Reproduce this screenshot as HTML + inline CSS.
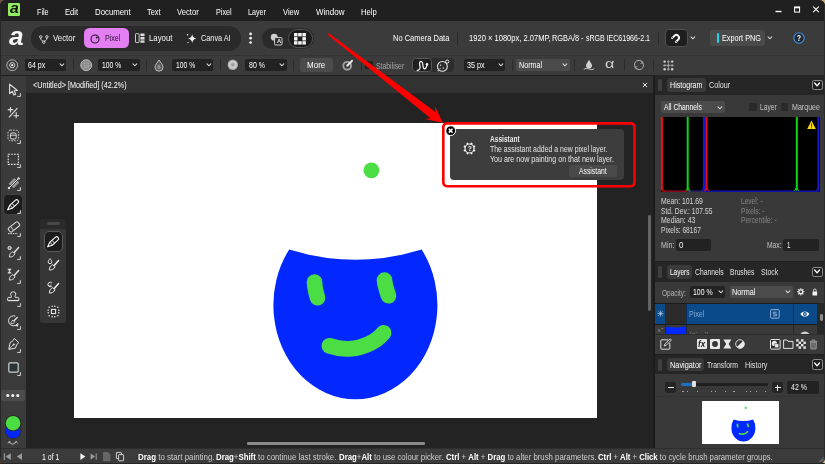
<!DOCTYPE html>
<html lang="en">
<head>
<meta charset="utf-8">
<title>Affinity - Assistant</title>
<style>
html,body{margin:0;padding:0;}
body{width:825px;height:464px;overflow:hidden;background:#202020;font-family:"Liberation Sans", sans-serif;position:relative;}
#app{filter:blur(0.4px);position:absolute;left:0;top:0;width:825px;height:464px;overflow:hidden;background:#202020;}
#app div,#app svg,#app span.t{position:absolute;}
#app svg{overflow:visible;}
#app div.sec{left:0;top:0;width:0;height:0;}
span.t{white-space:pre;transform-origin:0 50%;}
span.t b{font-weight:700;color:#fff;}
</style>
</head>
<body>
<div id="app">
<div style="left:0px;top:0px;width:12px;height:12px;background:#6e5048;"></div>
<div style="left:813px;top:0px;width:12px;height:12px;background:#c8aa78;"></div>
<div style="left:0px;top:452px;width:12px;height:12px;background:#5c3a2c;"></div>
<div style="left:813px;top:452px;width:12px;height:12px;background:#d6c49c;"></div>
<div style="left:0px;top:0px;width:825px;height:464px;background:#232323;border-radius:6px;"></div>
<div style="left:0px;top:0px;width:825px;height:21px;background:#202020;border-radius:6px 6px 0 0;"></div>
<div style="left:0px;top:21px;width:825px;height:34.5px;background:#3b3b3b;"></div>
<div style="left:0px;top:55px;width:825px;height:1px;background:#333;"></div>
<div style="left:0px;top:56px;width:825px;height:19px;background:#3b3b3b;"></div>
<div style="left:0px;top:74.5px;width:825px;height:1.5px;background:#1e1e1e;"></div>
<div style="left:26px;top:76px;width:627px;height:17px;background:#323232;"></div>
<div style="left:26px;top:93.5px;width:629px;height:355px;background:#232323;"></div>
<div style="left:0px;top:76px;width:26px;height:372px;background:#3b3b3b;"></div>
<div style="left:0px;top:448px;width:825px;height:16px;background:#3b3b3b;border-radius:0 0 6px 6px;"></div>
<div style="left:654.5px;top:75px;width:170.5px;height:373px;background:#393939;"></div>
<div class="sec" id="menubar">
<div style="left:7.9px;top:3.2px;width:12.4px;height:12.7px;background:#94ec62;border-radius:1.2px;"></div>
<span class="t" style="left:9.6px;top:-2px;line-height:20px;font-size:15.5px;color:#0c1408;font-weight:700;transform:scaleX(1.020);font-style:italic;">a</span>
<span class="t" style="left:36.6px;top:6px;line-height:12px;font-size:9.2px;color:#ffffff;transform:scaleX(0.783);">File</span>
<span class="t" style="left:65px;top:6px;line-height:12px;font-size:9.2px;color:#ffffff;transform:scaleX(0.821);">Edit</span>
<span class="t" style="left:94.8px;top:6px;line-height:12px;font-size:9.2px;color:#ffffff;transform:scaleX(0.850);">Document</span>
<span class="t" style="left:146.9px;top:6px;line-height:12px;font-size:9.2px;color:#ffffff;transform:scaleX(0.807);">Text</span>
<span class="t" style="left:177px;top:6px;line-height:12px;font-size:9.2px;color:#ffffff;transform:scaleX(0.837);">Vector</span>
<span class="t" style="left:215.8px;top:6px;line-height:12px;font-size:9.2px;color:#ffffff;transform:scaleX(0.788);">Pixel</span>
<span class="t" style="left:248px;top:6px;line-height:12px;font-size:9.2px;color:#ffffff;transform:scaleX(0.783);">Layer</span>
<span class="t" style="left:283px;top:6px;line-height:12px;font-size:9.2px;color:#ffffff;transform:scaleX(0.820);">View</span>
<span class="t" style="left:315.6px;top:6px;line-height:12px;font-size:9.2px;color:#ffffff;transform:scaleX(0.869);">Window</span>
<span class="t" style="left:360.7px;top:6px;line-height:12px;font-size:9.2px;color:#ffffff;transform:scaleX(0.836);">Help</span>
<svg style="left:770px;top:0px;" width="55" height="21" viewBox="0 0 55 21"><path d="M5.5 11.5h6" stroke="#fff" stroke-width="1.4" fill="none"/><rect x="24.6" y="7.1" width="5" height="5" fill="none" stroke="#fff" stroke-width="1"/><path d="M24.2 7.5h5.8" stroke="#fff" stroke-width="1.6"/><path d="M43.2 6.6l5.6 5.6M48.8 6.6l-5.6 5.6" stroke="#fff" stroke-width="1.1" fill="none"/></svg>
</div>
<div class="sec" id="toolbar">
<span class="t" style="left:8.6px;top:19px;line-height:34px;font-size:26px;color:#f6f6f6;font-weight:700;transform:scaleX(1.009);font-style:italic;">a</span>
<div style="left:30.7px;top:26px;width:210.5px;height:24.6px;background:#2a2a2a;border-radius:12.3px;"></div>
<svg style="left:39.4px;top:34.5px;fill:none;stroke:#e4e4e4;stroke-width:0.9;" width="9.6" height="9.2" viewBox="0 0 9.6 9.2"><circle cx="1.7" cy="1.8" r="1.2"/><circle cx="7.9" cy="1.8" r="1.2"/><circle cx="4.8" cy="7.2" r="1.2"/><path d="M1.7 3 C1.7 5.2 2.8 5.6 4.2 6.1 M7.9 3 C7.9 5.2 6.8 5.6 5.4 6.1"/></svg>
<span class="t" style="left:53.3px;top:32px;line-height:12px;font-size:9.2px;color:#f6f6f6;transform:scaleX(0.856);">Vector</span>
<div style="left:84.2px;top:28.1px;width:45.2px;height:20.2px;background:#e37ff3;border-radius:5.5px;"></div>
<svg style="left:90px;top:33.6px;" width="10" height="10" viewBox="0 0 10 10"><circle cx="5" cy="5" r="4" fill="none" stroke="#2a1530" stroke-width="1.1"/><circle cx="6.8" cy="3.4" r="1" fill="#2a1530"/></svg>
<span class="t" style="left:104.7px;top:32px;line-height:12px;font-size:9.2px;color:#2a1530;transform:scaleX(0.768);">Pixel</span>
<svg style="left:135px;top:33px;" width="10" height="10.5" viewBox="0 0 10 10.5"><rect x="0.5" y="0.7" width="3.6" height="8.8" rx="0.6" fill="none" stroke="#ddd" stroke-width="0.9"/><rect x="5.4" y="0.5" width="4.1" height="2.6" fill="#ddd"/><rect x="5.4" y="4" width="4.1" height="2.6" fill="#ddd"/><rect x="5.4" y="7.4" width="4.1" height="2.3" fill="#ddd"/></svg>
<span class="t" style="left:148.6px;top:32px;line-height:12px;font-size:9.2px;color:#f6f6f6;transform:scaleX(0.848);">Layout</span>
<svg style="left:186px;top:33px;" width="11" height="11" viewBox="0 0 11 11"><path d="M6.2 1.3 Q6.8 5 10.4 5.6 Q6.8 6.2 6.2 9.9 Q5.6 6.2 2 5.6 Q5.6 5 6.2 1.3Z" fill="#f0f0f0"/><circle cx="1.6" cy="1.8" r="0.8" fill="#f0f0f0"/><circle cx="2" cy="9.6" r="0.7" fill="#f0f0f0"/></svg>
<span class="t" style="left:200.6px;top:32px;line-height:12px;font-size:9.2px;color:#f6f6f6;transform:scaleX(0.794);">Canva AI</span>
<svg style="left:247px;top:30px;" width="7" height="16" viewBox="0 0 7 16"><circle cx="3.6" cy="3.9" r="1.35" fill="#f2f2f2"/><circle cx="3.6" cy="8.2" r="1.35" fill="#f2f2f2"/><circle cx="3.6" cy="12.5" r="1.35" fill="#f2f2f2"/></svg>
<div style="left:262.3px;top:28px;width:52px;height:21px;background:#2a2a2a;border-radius:10.5px;"></div>
<svg style="left:269.5px;top:32.5px;" width="14" height="13" viewBox="0 0 14 13"><circle cx="4.2" cy="4.2" r="3.4" fill="#cfcfcf"/><rect x="4.6" y="4.6" width="7.4" height="7.4" rx="1" fill="#2a2a2a" stroke="#e0e0e0" stroke-width="0.9"/></svg>
<span class="t" style="left:276.6px;top:37px;line-height:8px;font-size:6.2px;color:#e8e8e8;font-weight:700;transform:scaleX(0.940);">A</span>
<div style="left:288.4px;top:29.4px;width:24.4px;height:18.6px;background:#1c1c1c;border-radius:9.3px;border:1px solid #555;box-sizing:border-box;"></div>
<svg style="left:294.3px;top:32.6px;" width="12" height="11.6" viewBox="0 0 12 11.6"><rect x="0" y="0" width="3.5" height="3.4" fill="#f4f4f4"/><rect x="4.2" y="0" width="3.5" height="3.4" fill="#f4f4f4"/><rect x="8.4" y="0" width="3.5" height="3.4" fill="#f4f4f4"/><rect x="0" y="4.1" width="3.5" height="3.4" fill="#f4f4f4"/><rect x="8.4" y="4.1" width="3.5" height="3.4" fill="#f4f4f4"/><rect x="0" y="8.2" width="3.5" height="3.4" fill="#f4f4f4"/><rect x="4.2" y="8.2" width="3.5" height="3.4" fill="#f4f4f4"/><rect x="8.4" y="8.2" width="3.5" height="3.4" fill="#f4f4f4"/></svg>
<span class="t" style="left:393.4px;top:32px;line-height:12px;font-size:9px;color:#ffffff;transform:scaleX(0.835);">No Camera Data</span>
<div style="left:457px;top:32px;width:1.2px;height:12.5px;background:#2a2a2a;"></div>
<span class="t" style="left:468.6px;top:32px;line-height:12px;font-size:9px;color:#ffffff;transform:scaleX(0.841);">1920 × 1080px, 2.07MP, </span>
<span class="t" style="left:552.4px;top:32px;line-height:12px;font-size:9px;color:#ffffff;transform:scaleX(0.819);">RGBA/8 - </span>
<span class="t" style="left:586px;top:32px;line-height:12px;font-size:9px;color:#ffffff;transform:scaleX(0.780);">sRGB IEC61966-2.1</span>
<div style="left:657.6px;top:32px;width:1.2px;height:12.5px;background:#2a2a2a;"></div>
<div style="left:664.7px;top:29.2px;width:23px;height:17.6px;background:#1e1e1e;border-radius:4px;border:1px solid #505050;box-sizing:border-box;"></div>
<svg style="left:670px;top:32px;" width="12" height="12" viewBox="0 0 12 12"><g transform="rotate(45 6 6)"><path d="M3.3 9.6 V5.6 A2.7 2.7 0 0 1 8.7 5.6 V9.6" fill="none" stroke="#ffffff" stroke-width="1.9"/><path d="M2.35 8.2 H4.25 M7.75 8.2 H9.65" stroke="#1e1e1e" stroke-width="0.7"/></g></svg>
<svg style="left:690.1px;top:36.3px;" width="5.8" height="3.8" viewBox="0 0 5.8 3.8"><path d="M1 0.855 L2.9 2.755 L4.8 0.855" fill="none" stroke="#dcdcdc" stroke-width="1.05" stroke-linecap="round" stroke-linejoin="round"/></svg>
<div style="left:710.3px;top:30px;width:54.7px;height:16px;background:#4a4a4a;border-radius:3px;"></div>
<div style="left:716.6px;top:33px;width:2.3px;height:10px;background:#19d3e6;border-radius:1px;"></div>
<span class="t" style="left:721.5px;top:32px;line-height:12px;font-size:9px;color:#ffffff;transform:scaleX(0.812);">Export PNG</span>
<svg style="left:766.7px;top:36.3px;" width="5.8" height="3.8" viewBox="0 0 5.8 3.8"><path d="M1 0.855 L2.9 2.755 L4.8 0.855" fill="none" stroke="#dcdcdc" stroke-width="1.05" stroke-linecap="round" stroke-linejoin="round"/></svg>
<svg style="left:793px;top:32px;" width="12" height="12" viewBox="0 0 12 12"><circle cx="6" cy="6" r="5.2" fill="#232a33" stroke="#3b8fe6" stroke-width="1.1"/></svg>
<span class="t" style="left:797.1px;top:33px;line-height:11px;font-size:8.5px;color:#fff;font-weight:700;transform:scaleX(0.769);">?</span>
</div>
<div class="sec" id="contextbar">
<svg style="left:5.5px;top:59px;" width="12.5" height="12.5" viewBox="0 0 12.5 12.5"><circle cx="6.2" cy="6.2" r="5.4" fill="none" stroke="#bdbdbd" stroke-width="0.9"/><circle cx="6.2" cy="6.2" r="2.6" fill="none" stroke="#e0e0e0" stroke-width="0.9"/><circle cx="6.2" cy="6.2" r="1.1" fill="#eee"/></svg>
<div style="left:24.9px;top:58.7px;width:41.3px;height:12.4px;background:#222222;border-radius:2px;"></div>
<span class="t" style="left:28.4px;top:60px;line-height:11px;font-size:8.5px;color:#ffffff;transform:scaleX(0.827);">64 px</span>
<svg style="left:58.9px;top:63px;" width="5.8" height="3.8" viewBox="0 0 5.8 3.8"><path d="M1 0.855 L2.9 2.755 L4.8 0.855" fill="none" stroke="#dcdcdc" stroke-width="1.05" stroke-linecap="round" stroke-linejoin="round"/></svg>
<div style="left:73px;top:59px;width:1px;height:12px;background:#2c2c2c;"></div>
<svg style="left:79.8px;top:58.8px;" width="12.4" height="12.4" viewBox="0 0 12.4 12.4"><circle cx="6.2" cy="6.2" r="5.4" fill="#7a7a7a" stroke="#cfcfcf" stroke-width="0.9"/><path d="M2 4.2h8.4M1.2 6.2h10M2 8.2h8.4M4.2 1.6v9.2M6.2 1v10.4M8.2 1.6v9.2" stroke="#bdbdbd" stroke-width="0.5"/></svg>
<div style="left:98.2px;top:58.7px;width:41.4px;height:12.4px;background:#222222;border-radius:2px;"></div>
<span class="t" style="left:101.9px;top:60px;line-height:11px;font-size:8.5px;color:#ffffff;transform:scaleX(0.796);">100 %</span>
<svg style="left:132.1px;top:63px;" width="5.8" height="3.8" viewBox="0 0 5.8 3.8"><path d="M1 0.855 L2.9 2.755 L4.8 0.855" fill="none" stroke="#dcdcdc" stroke-width="1.05" stroke-linecap="round" stroke-linejoin="round"/></svg>
<div style="left:146px;top:59px;width:1px;height:12px;background:#2c2c2c;"></div>
<svg style="left:154px;top:59px;" width="10" height="12.5" viewBox="0 0 10 12.5"><path d="M5 1 C6.6 3.6 9 5.8 9 8.2 A4 4 0 0 1 1 8.2 C1 5.8 3.4 3.6 5 1Z" fill="#5a5a5a" stroke="#c8c8c8" stroke-width="0.9"/><path d="M5 5.2 C6 6.6 6.8 7.4 6.8 8.5 A1.8 1.8 0 0 1 3.2 8.5 C3.2 7.4 4 6.6 5 5.2Z" fill="#8a8a8a"/></svg>
<div style="left:171.7px;top:58.7px;width:41.6px;height:12.4px;background:#222222;border-radius:2px;"></div>
<span class="t" style="left:175.5px;top:60px;line-height:11px;font-size:8.5px;color:#ffffff;transform:scaleX(0.796);">100 %</span>
<svg style="left:206.1px;top:63px;" width="5.8" height="3.8" viewBox="0 0 5.8 3.8"><path d="M1 0.855 L2.9 2.755 L4.8 0.855" fill="none" stroke="#dcdcdc" stroke-width="1.05" stroke-linecap="round" stroke-linejoin="round"/></svg>
<div style="left:219.5px;top:59px;width:1px;height:12px;background:#2c2c2c;"></div>
<svg style="left:227px;top:59.2px;" width="11.6" height="11.6" viewBox="0 0 11.6 11.6"><circle cx="5.8" cy="5.8" r="5.2" fill="#a8a8a8"/><circle cx="5.8" cy="5.8" r="4" fill="#cfcfcf"/><circle cx="5.8" cy="5.8" r="2" fill="#a0a0a0"/></svg>
<div style="left:245px;top:58.7px;width:41.8px;height:12.4px;background:#222222;border-radius:2px;"></div>
<span class="t" style="left:248.6px;top:60px;line-height:11px;font-size:8.5px;color:#ffffff;transform:scaleX(0.821);">80 %</span>
<svg style="left:279.3px;top:63px;" width="5.8" height="3.8" viewBox="0 0 5.8 3.8"><path d="M1 0.855 L2.9 2.755 L4.8 0.855" fill="none" stroke="#dcdcdc" stroke-width="1.05" stroke-linecap="round" stroke-linejoin="round"/></svg>
<div style="left:293.1px;top:59px;width:1px;height:12px;background:#2c2c2c;"></div>
<div style="left:300.4px;top:58px;width:32.2px;height:14px;background:#4b4b4b;border-radius:2.5px;"></div>
<span class="t" style="left:307.4px;top:59px;line-height:12px;font-size:9px;color:#ffffff;transform:scaleX(0.892);">More</span>
<svg style="left:341.6px;top:59px;" width="12" height="12" viewBox="0 0 12 12"><circle cx="5.2" cy="6.8" r="3.9" fill="none" stroke="#a0a0a0" stroke-width="1.9"/><circle cx="5.2" cy="6.8" r="1.2" fill="#a0a0a0"/><path d="M5.8 6.2 L10 1.8" stroke="#f4f4f4" stroke-width="1.9" stroke-linecap="round"/></svg>
<div style="left:361px;top:59px;width:1px;height:12px;background:#2c2c2c;"></div>
<div style="left:365.2px;top:61px;width:8px;height:8px;background:#222;border-radius:1px;"></div>
<span class="t" style="left:376.4px;top:61px;line-height:11px;font-size:8.6px;color:#a6a6a6;transform:scaleX(0.798);">Stabiliser</span>
<div style="left:411.6px;top:58.4px;width:42.6px;height:14px;background:#2d2d2d;border-radius:3.5px;"></div>
<div style="left:412px;top:58.4px;width:20.2px;height:14px;background:#1e1e1e;border-radius:3.5px;border:1px solid #5a5a5a;box-sizing:border-box;"></div>
<svg style="left:415.6px;top:59.6px;" width="14" height="12" viewBox="0 0 14 12"><path d="M1.2 10.4 C3.6 10.2 4.8 8 3.8 5.2 C2.8 2.4 4.4 0.8 5.8 1.8 C7.6 3 6.2 7.6 8 8.6 C9.6 9.4 10.6 7 11 4.6" fill="none" stroke="#f4f4f4" stroke-width="1.25" stroke-linecap="round"/><circle cx="11" cy="4.4" r="1.3" fill="#f4f4f4"/></svg>
<svg style="left:436.4px;top:59.2px;" width="14" height="13" viewBox="0 0 14 13"><circle cx="6.4" cy="7.4" r="4.9" fill="none" stroke="#e4e4e4" stroke-width="1.1"/><circle cx="11.2" cy="2.6" r="1.6" fill="#2d2d2d" stroke="#e4e4e4" stroke-width="1"/><circle cx="4.6" cy="6.2" r="0.7" fill="#e4e4e4"/><circle cx="7.2" cy="9" r="0.7" fill="#e4e4e4"/><circle cx="4.2" cy="9.4" r="0.5" fill="#e4e4e4"/><path d="M1.4 11.8 h1.6" stroke="#e4e4e4" stroke-width="0.9"/></svg>
<div style="left:463.5px;top:58.7px;width:41.5px;height:12.4px;background:#222222;border-radius:2px;"></div>
<span class="t" style="left:467.2px;top:60px;line-height:11px;font-size:8.5px;color:#ffffff;transform:scaleX(0.846);">35 px</span>
<svg style="left:497.7px;top:63px;" width="5.8" height="3.8" viewBox="0 0 5.8 3.8"><path d="M1 0.855 L2.9 2.755 L4.8 0.855" fill="none" stroke="#dcdcdc" stroke-width="1.05" stroke-linecap="round" stroke-linejoin="round"/></svg>
<div style="left:511.5px;top:59px;width:1px;height:12px;background:#2c2c2c;"></div>
<div style="left:516px;top:58.7px;width:54.2px;height:12.4px;background:#4b4b4b;border-radius:2px;"></div>
<span class="t" style="left:519px;top:60px;line-height:11px;font-size:8.5px;color:#ffffff;transform:scaleX(0.847);">Normal</span>
<svg style="left:562.1px;top:63px;" width="5.8" height="3.8" viewBox="0 0 5.8 3.8"><path d="M1 0.855 L2.9 2.755 L4.8 0.855" fill="none" stroke="#dcdcdc" stroke-width="1.05" stroke-linecap="round" stroke-linejoin="round"/></svg>
<div style="left:574px;top:59px;width:1px;height:12px;background:#2c2c2c;"></div>
<svg style="left:582.5px;top:59px;" width="12" height="12" viewBox="0 0 12 12"><path d="M6 0.8 C7.2 3.2 9 4.8 9 6.6 A3 3 0 0 1 3 6.6 C3 4.8 4.8 3.2 6 0.8Z" fill="#d0d0d0"/><path d="M0.8 10.2 Q3 8.6 6 10 Q9 11.4 11.2 9.8" fill="none" stroke="#d0d0d0" stroke-width="0.9"/></svg>
<span class="t" style="left:605.2px;top:55px;line-height:18px;font-size:13.5px;color:#d0d0d0;transform:scaleX(1.203);">α</span>
<div style="left:623.5px;top:59px;width:1px;height:12px;background:#2c2c2c;"></div>
<svg style="left:633.4px;top:59px;" width="12" height="12" viewBox="0 0 12 12"><path d="M2.2 8.2 A4.4 4.4 0 0 1 9.6 3.4" fill="none" stroke="#b5b5b5" stroke-width="1"/><path d="M9.8 3.8 A4.4 4.4 0 0 1 2.4 8.6" fill="none" stroke="#b5b5b5" stroke-width="1"/><path d="M8.2 1.6 L10 3.6 L7.6 4.4" fill="none" stroke="#b5b5b5" stroke-width="0.9"/><path d="M3.8 10.4 L2 8.4 L4.4 7.6" fill="none" stroke="#b5b5b5" stroke-width="0.9"/></svg>
<div style="left:653px;top:59px;width:1px;height:12px;background:#2c2c2c;"></div>
<svg style="left:662.6px;top:59.8px;" width="10.8" height="10.8" viewBox="0 0 12 12"><circle cx="1.8" cy="1.8" r="1.35" fill="#d0d0d0"/><circle cx="6" cy="1.8" r="1.35" fill="#909090"/><circle cx="10.2" cy="1.8" r="1.35" fill="#d0d0d0"/><circle cx="1.8" cy="6" r="1.35" fill="#909090"/><circle cx="6" cy="6" r="1.35" fill="#909090"/><circle cx="10.2" cy="6" r="1.35" fill="#909090"/><circle cx="1.8" cy="10.2" r="1.35" fill="#d0d0d0"/><circle cx="6" cy="10.2" r="1.35" fill="#909090"/><circle cx="10.2" cy="10.2" r="1.35" fill="#d0d0d0"/><path d="M6 0.4v11.2M0.4 6h11.2" stroke="#b0b0b0" stroke-width="0.7"/></svg>
</div>
<div class="sec" id="doctab">
<span class="t" style="left:32.8px;top:80px;line-height:11px;font-size:8.2px;color:#ffffff;transform:scaleX(0.883);">&lt;Untitled&gt; [Modified] (42.2%)</span>
<svg style="left:641.8px;top:81.8px;" width="6" height="6" viewBox="0 0 6 6"><path d="M0.9 0.9l4.2 4.2M5.1 0.9l-4.2 4.2" stroke="#f4f4f4" stroke-width="0.9" fill="none"/></svg>
</div>
<div class="sec" id="tools">
<svg style="left:6.5px;top:82.5px;" width="14" height="14" viewBox="0 0 14 14"><path d="M2.6 1.2 L2.6 10.6 L5.2 8.4 L6.9 12 L8.7 11.2 L7.1 7.7 L10.4 7.5 Z" fill="none" stroke="#e0e0e0" stroke-width="1.1" stroke-linejoin="round"/></svg>
<svg style="left:17.4px;top:93.4px;" width="4" height="4" viewBox="0 0 4 4"><path d="M3.4 0.2v3.2h-3.2" fill="none" stroke="#d4d4d4" stroke-width="1"/></svg>
<svg style="left:6.5px;top:105.6px;" width="14" height="14" viewBox="0 0 14 14"><path d="M0.8 3.6h5.4M3.5 1v5.4" stroke="#e0e0e0" stroke-width="1.1"/><path d="M2 11.4 L10.4 2.2" stroke="#e0e0e0" stroke-width="1.1"/><path d="M9.2 6.2v6M6.4 9.8h5.6" stroke="#e0e0e0" stroke-width="1.1"/></svg>
<svg style="left:6.5px;top:128.8px;" width="14" height="14" viewBox="0 0 14 14"><rect x="1" y="1.2" width="10.6" height="10.6" rx="2.4" fill="none" stroke="#e0e0e0" stroke-width="0.9" stroke-dasharray="1.6 1.1"/><rect x="3.4" y="4" width="5.8" height="6" rx="1.6" fill="none" stroke="#e0e0e0" stroke-width="1"/><path d="M3.4 6.2h5.8" stroke="#e0e0e0" stroke-width="0.9"/></svg>
<svg style="left:17.4px;top:140.2px;" width="4" height="4" viewBox="0 0 4 4"><path d="M3.4 0.2v3.2h-3.2" fill="none" stroke="#d4d4d4" stroke-width="1"/></svg>
<svg style="left:6.5px;top:152.6px;" width="14" height="14" viewBox="0 0 14 14"><rect x="1.2" y="1.2" width="10.2" height="10.2" fill="none" stroke="#e0e0e0" stroke-width="1.1" stroke-dasharray="1.8 1.1"/></svg>
<svg style="left:17.4px;top:163.8px;" width="4" height="4" viewBox="0 0 4 4"><path d="M3.4 0.2v3.2h-3.2" fill="none" stroke="#d4d4d4" stroke-width="1"/></svg>
<svg style="left:6.5px;top:175.6px;" width="14" height="14" viewBox="0 0 14 14"><path d="M2.6 8.6 L8.2 2.8" stroke="#9a9a9a" stroke-width="2.6"/><path d="M5.8 11.4 L11.4 5.6" stroke="#9a9a9a" stroke-width="2.6"/><path d="M2 12 L11.6 2.4" stroke="#e0e0e0" stroke-width="1"/><circle cx="11.6" cy="2.4" r="1.2" fill="#e0e0e0"/><circle cx="2" cy="12" r="1.2" fill="#e0e0e0"/></svg>
<svg style="left:17.4px;top:187px;" width="4" height="4" viewBox="0 0 4 4"><path d="M3.4 0.2v3.2h-3.2" fill="none" stroke="#d4d4d4" stroke-width="1"/></svg>
<div style="left:3px;top:194.4px;width:19.8px;height:20.4px;background:#1c1c1c;border-radius:5px;border:1px solid #424242;box-sizing:border-box;"></div>
<svg style="left:5.6px;top:197.6px;" width="14" height="14" viewBox="0 0 14 14"><g transform="rotate(-42 7 7)"><path d="M4.2 5.1 H12.2 a1.5 1.5 0 0 1 1.5 1.5 v0.8 a1.5 1.5 0 0 1 -1.5 1.5 H4.2 L-0.2 7 Z" fill="#1c1c1c" stroke="#ffffff" stroke-width="1.1" stroke-linejoin="round"/><path d="M4.6 5.2v3.6M7.4 5.2v3.6" stroke="#ffffff" stroke-width="0.9"/></g></svg>
<svg style="left:17.2px;top:209.6px;" width="4" height="4" viewBox="0 0 4 4"><path d="M3.4 0.2v3.2h-3.2" fill="none" stroke="#e0e0e0" stroke-width="1"/></svg>
<svg style="left:6.5px;top:221.2px;" width="14" height="14" viewBox="0 0 14 14"><g transform="rotate(-38 7 6)"><rect x="1" y="3.4" width="12" height="5" rx="1.3" fill="none" stroke="#e0e0e0" stroke-width="1"/><path d="M4.6 3.4v5" stroke="#e0e0e0" stroke-width="0.9"/></g><path d="M1 12.6h10" stroke="#e0e0e0" stroke-width="1" stroke-dasharray="1.5 0.9"/></svg>
<svg style="left:17.4px;top:233.4px;" width="4" height="4" viewBox="0 0 4 4"><path d="M3.4 0.2v3.2h-3.2" fill="none" stroke="#d4d4d4" stroke-width="1"/></svg>
<svg style="left:6.5px;top:244.6px;" width="14" height="14" viewBox="0 0 14 14"><path d="M2.4 12 C2.2 9.6 3.6 7.6 5.8 6.6 L8 8.8 C7 11 5 12.2 2.4 12Z" fill="none" stroke="#e0e0e0" stroke-width="1.0" stroke-linejoin="round"/><path d="M7.2 7.4 L11.6 2.6" stroke="#e0e0e0" stroke-width="1.5" stroke-linecap="round"/><circle cx="2.6" cy="3" r="1.7" fill="#8a8a8a" stroke="#e0e0e0" stroke-width="0.9"/></svg>
<svg style="left:17.4px;top:256.4px;" width="4" height="4" viewBox="0 0 4 4"><path d="M3.4 0.2v3.2h-3.2" fill="none" stroke="#d4d4d4" stroke-width="1"/></svg>
<svg style="left:6.5px;top:267.8px;" width="14" height="14" viewBox="0 0 14 14"><path d="M2.4 12 C2.2 9.6 3.6 7.6 5.8 6.6 L8 8.8 C7 11 5 12.2 2.4 12Z" fill="none" stroke="#e0e0e0" stroke-width="1.0" stroke-linejoin="round"/><path d="M7.2 7.4 L11.6 2.6" stroke="#e0e0e0" stroke-width="1.5" stroke-linecap="round"/><path d="M0.8 1h3.4l-3.4 4.2h3.4z" fill="#e0e0e0" stroke="#e0e0e0" stroke-width="0.5" stroke-linejoin="round"/></svg>
<svg style="left:17.4px;top:279.6px;" width="4" height="4" viewBox="0 0 4 4"><path d="M3.4 0.2v3.2h-3.2" fill="none" stroke="#d4d4d4" stroke-width="1"/></svg>
<svg style="left:6.5px;top:291px;" width="14" height="14" viewBox="0 0 14 14"><path d="M4.2 6.4 C4.8 5 3.6 4.4 3.6 3 a2.6 2.2 0 0 1 5.2 0 C8.8 4.4 7.6 5 8.2 6.4 H10.6 a1.2 1.2 0 0 1 1.2 1.2 V9.4 H0.6 V7.6 a1.2 1.2 0 0 1 1.2 -1.2 Z" fill="none" stroke="#e0e0e0" stroke-width="1" stroke-linejoin="round"/><path d="M1 9.6h10.6" stroke="#e0e0e0" stroke-width="1.2"/></svg>
<svg style="left:17.4px;top:302.8px;" width="4" height="4" viewBox="0 0 4 4"><path d="M3.4 0.2v3.2h-3.2" fill="none" stroke="#d4d4d4" stroke-width="1"/></svg>
<svg style="left:6.5px;top:314.4px;" width="14" height="14" viewBox="0 0 14 14"><path d="M8.4 2.2 A5 5 0 1 0 11 9" fill="none" stroke="#e0e0e0" stroke-width="1"/><path d="M4 9.6 C3.8 8 4.6 6.8 6 6.2 L7.6 7.8 C7 9.2 5.8 10 4 9.6Z" fill="none" stroke="#e0e0e0" stroke-width="0.9"/><path d="M7 6.8 L10.2 3.4" stroke="#e0e0e0" stroke-width="1.4" stroke-linecap="round"/><path d="M7.6 11.4 l4 -1.6 l-0.8 3z" fill="#e0e0e0"/></svg>
<svg style="left:17.4px;top:326.2px;" width="4" height="4" viewBox="0 0 4 4"><path d="M3.4 0.2v3.2h-3.2" fill="none" stroke="#d4d4d4" stroke-width="1"/></svg>
<svg style="left:6.5px;top:337.4px;" width="14" height="14" viewBox="0 0 14 14"><path d="M7.4 1.4 L11.8 5.8 L9.8 7.4 L8.4 11.2 L1.8 12.4 L3 5.8 L6 3.6 Z" fill="none" stroke="#e0e0e0" stroke-width="1" stroke-linejoin="round"/><path d="M2.2 12 L6.2 8" stroke="#e0e0e0" stroke-width="0.9"/><circle cx="6.8" cy="7.4" r="1" fill="#e0e0e0"/></svg>
<svg style="left:17.4px;top:349.4px;" width="4" height="4" viewBox="0 0 4 4"><path d="M3.4 0.2v3.2h-3.2" fill="none" stroke="#d4d4d4" stroke-width="1"/></svg>
<svg style="left:6.5px;top:360.8px;" width="14" height="14" viewBox="0 0 14 14"><rect x="1.8" y="1.8" width="9.4" height="9.4" rx="1.2" fill="#26343a" stroke="#cfcfcf" stroke-width="1.2"/></svg>
<svg style="left:17.4px;top:372.4px;" width="4" height="4" viewBox="0 0 4 4"><path d="M3.4 0.2v3.2h-3.2" fill="none" stroke="#d4d4d4" stroke-width="1"/></svg>
<div style="left:1.2px;top:389.5px;width:24px;height:11.5px;background:#4c4c4c;border-radius:1.5px;"></div>
<svg style="left:4px;top:391px;" width="18" height="9" viewBox="0 0 18 9"><circle cx="3.8" cy="4.5" r="1.55" fill="#f4f4f4"/><circle cx="8.8" cy="4.5" r="1.55" fill="#f4f4f4"/><circle cx="13.8" cy="4.5" r="1.55" fill="#f4f4f4"/></svg>
<svg style="left:4px;top:414px;" width="18" height="34" viewBox="0 0 18 34"><circle cx="9.1" cy="17" r="8.3" fill="#2a2a2a"/><circle cx="9.1" cy="17" r="7.3" fill="#0228ff"/><circle cx="9.1" cy="9.2" r="8.3" fill="#2a2a2a"/><circle cx="9.1" cy="9.2" r="7.3" fill="#4bdd44"/><path d="M5 27.8 Q8.7 32.4 12.4 27.8" fill="none" stroke="#c8c8c8" stroke-width="0.9"/><path d="M4 29.4 L5 27.4 L6.8 28.4 M13.4 29.4 L12.4 27.4 L10.6 28.4" fill="none" stroke="#c8c8c8" stroke-width="0.8"/></svg>
</div>
<div class="sec" id="flyout">
<div style="left:40.4px;top:219px;width:25.8px;height:103.6px;background:#2a2a2a;border-radius:2px;"></div>
<div style="left:40.4px;top:229.3px;width:25.8px;height:93.3px;background:#363636;border-radius:0 0 2px 2px;"></div>
<div style="left:47px;top:222px;width:13px;height:3.4px;background:#484848;border-radius:1.7px;"></div>
<div style="left:43.7px;top:231.4px;width:19.6px;height:20.5px;background:#1c1c1c;border-radius:5px;border:1px solid #5a5a5a;box-sizing:border-box;"></div>
<svg style="left:46.4px;top:234.8px;" width="14" height="14" viewBox="0 0 14 14"><g transform="rotate(-42 7 7)"><path d="M4.2 5.1 H12.2 a1.5 1.5 0 0 1 1.5 1.5 v0.8 a1.5 1.5 0 0 1 -1.5 1.5 H4.2 L-0.2 7 Z" fill="#1c1c1c" stroke="#ffffff" stroke-width="1.1" stroke-linejoin="round"/><path d="M4.6 5.2v3.6M7.4 5.2v3.6" stroke="#ffffff" stroke-width="0.9"/></g></svg>
<svg style="left:46.8px;top:258px;" width="14" height="14" viewBox="0 0 14 14"><path d="M2.4 12 C2.2 9.6 3.6 7.6 5.8 6.6 L8 8.8 C7 11 5 12.2 2.4 12Z" fill="none" stroke="#f0f0f0" stroke-width="1.0" stroke-linejoin="round"/><path d="M7.2 7.4 L11.6 2.6" stroke="#f0f0f0" stroke-width="1.5" stroke-linecap="round"/><path d="M3 0.6 C3.8 1.8 4.8 2.8 4.8 3.9 A1.8 1.8 0 0 1 1.2 3.9 C1.2 2.8 2.2 1.8 3 0.6Z" fill="none" stroke="#f0f0f0" stroke-width="0.9"/></svg>
<svg style="left:46.8px;top:281.2px;" width="14" height="14" viewBox="0 0 14 14"><path d="M2.4 12 C2.2 9.6 3.6 7.6 5.8 6.6 L8 8.8 C7 11 5 12.2 2.4 12Z" fill="none" stroke="#f0f0f0" stroke-width="1.0" stroke-linejoin="round"/><path d="M7.2 7.4 L11.6 2.6" stroke="#f0f0f0" stroke-width="1.5" stroke-linecap="round"/><path d="M5 2.2 A2.2 2.2 0 1 0 4.8 5" fill="none" stroke="#f0f0f0" stroke-width="1"/><path d="M0.8 3.8 l1.6 1.8 l1.4 -1.9" fill="none" stroke="#f0f0f0" stroke-width="0.9"/></svg>
<svg style="left:47px;top:304.6px;" width="13" height="13" viewBox="0 0 13 13"><rect x="4.4" y="4.4" width="4.2" height="4.2" fill="none" stroke="#f0f0f0" stroke-width="1"/><circle cx="1.2" cy="5.2" r="0.75" fill="#f0f0f0"/><circle cx="1.2" cy="7.8" r="0.75" fill="#f0f0f0"/><circle cx="11.8" cy="5.2" r="0.75" fill="#f0f0f0"/><circle cx="11.8" cy="7.8" r="0.75" fill="#f0f0f0"/><circle cx="5.2" cy="1.2" r="0.75" fill="#f0f0f0"/><circle cx="7.8" cy="1.2" r="0.75" fill="#f0f0f0"/><circle cx="5.2" cy="11.8" r="0.75" fill="#f0f0f0"/><circle cx="7.8" cy="11.8" r="0.75" fill="#f0f0f0"/><circle cx="2.2" cy="2.2" r="0.75" fill="#f0f0f0"/><circle cx="10.8" cy="2.2" r="0.75" fill="#f0f0f0"/><circle cx="2.2" cy="10.8" r="0.75" fill="#f0f0f0"/><circle cx="10.8" cy="10.8" r="0.75" fill="#f0f0f0"/></svg>
</div>
<div class="sec" id="canvas">
<div style="left:74px;top:123.3px;width:523.4px;height:294.3px;background:#ffffff;"></div>
<svg style="left:0px;top:0px;" width="825" height="464" viewBox="0 0 825 464"><path d="M289.2 249.5 A82 94.2 0 1 0 421.6 249.5 A221.7 221.7 0 0 1 289.2 249.5 Z" fill="#0228ff"/><path d="M314.5 282 C314.7 287 315.8 292 317.5 297.7 M384.5 280.1 C384.8 285 386.5 290 388.5 295.8" stroke="#4bdd44" stroke-width="15.6" stroke-linecap="round" fill="none"/><path d="M329.4 345.8 C337 348.5 345 349.2 351.6 348.6 C360 348 375 343.5 383.5 332.8" stroke="#4bdd44" stroke-width="15.8" stroke-linecap="round" stroke-linejoin="round" fill="none"/><circle cx="371.4" cy="170.3" r="7.9" fill="#4bdd44"/></svg>
<div style="left:648.2px;top:215.2px;width:2.8px;height:95.4px;background:#646464;border-radius:1.4px;"></div>
<div style="left:246.6px;top:442.2px;width:178px;height:2.6px;background:#8a8a8a;border-radius:1.3px;"></div>
</div>
<div class="sec" id="panels">
<div style="left:653px;top:75.4px;width:2px;height:373px;background:#1c1c1c;"></div>
<div style="left:654.5px;top:75.2px;width:170.5px;height:19.6px;background:#262626;"></div>
<div style="left:658.4px;top:79px;width:3.4px;height:12px;background:#404040;border-radius:1.7px;"></div>
<div style="left:667px;top:78.2px;width:38.6px;height:13.4px;background:#3a3a3a;border-radius:3px;"></div>
<span class="t" style="left:669.6px;top:80px;line-height:11px;font-size:8.8px;color:#ffffff;transform:scaleX(0.808);">Histogram</span>
<span class="t" style="left:708.8px;top:80px;line-height:11px;font-size:8.8px;color:#e0e0e0;transform:scaleX(0.818);">Colour</span>
<div style="left:812.4px;top:79.6px;width:10.2px;height:10.4px;background:#1f1f1f;border-radius:2.2px;border:1px solid #8c8c8c;box-sizing:border-box;"></div>
<svg style="left:814.4px;top:82.4px;" width="6.2" height="5" viewBox="0 0 6.2 5"><path d="M0.7 1 L3.1 3.9 L5.5 1" fill="none" stroke="#ffffff" stroke-width="1.3" stroke-linecap="round" stroke-linejoin="round"/></svg>
<div style="left:661px;top:101.4px;width:63.6px;height:12px;background:#4b4b4b;border-radius:2px;"></div>
<span class="t" style="left:664px;top:102px;line-height:11px;font-size:8.8px;color:#ffffff;transform:scaleX(0.769);">All Channels</span>
<svg style="left:716.7px;top:105.5px;" width="5.8" height="3.8" viewBox="0 0 5.8 3.8"><path d="M1 0.855 L2.9 2.755 L4.8 0.855" fill="none" stroke="#dcdcdc" stroke-width="1.05" stroke-linecap="round" stroke-linejoin="round"/></svg>
<div style="left:749.4px;top:103.4px;width:7.4px;height:7.4px;background:#2a2a2a;border-radius:1px;"></div>
<span class="t" style="left:760px;top:102px;line-height:11px;font-size:8.8px;color:#c6c6c6;transform:scaleX(0.754);">Layer</span>
<div style="left:781px;top:103.4px;width:7.4px;height:7.4px;background:#2a2a2a;border-radius:1px;"></div>
<span class="t" style="left:791.6px;top:102px;line-height:11px;font-size:8.8px;color:#c6c6c6;transform:scaleX(0.806);">Marquee</span>
<div style="left:661px;top:117px;width:158.6px;height:75px;background:#000;"></div>
<svg style="left:0px;top:0px;" width="825" height="464" viewBox="0 0 825 464"><path d="M662 191.1 H690" stroke="#c81428" stroke-width="1.1"/><path d="M688 191.1 H706" stroke="#3a30a0" stroke-width="1.1"/><path d="M704 191.1 H819.4" stroke="#1414d8" stroke-width="1.3"/><path d="M661.9 117 V190.4" stroke="#ee1010" stroke-width="2" fill="none"/><path d="M662.7 187.6 Q662.9 190.6 664.9 191" stroke="#ee1010" stroke-width="0.8" fill="none"/><path d="M687.7 117 V190.4" stroke="#10d810" stroke-width="2" fill="none"/><path d="M688.5 187.6 Q688.7 190.6 690.7 191" stroke="#10d810" stroke-width="0.8" fill="none"/><path d="M686.9 188.4 Q686.7 190.8 685.3 191" stroke="#10d810" stroke-width="0.7" fill="none"/><path d="M703.9 117 V190.4" stroke="#1818e0" stroke-width="2" fill="none"/><path d="M703.1 187.6 Q702.9 190.6 700.9 191" stroke="#1818e0" stroke-width="0.8" fill="none"/><path d="M704.7 188.4 Q704.9 190.8 706.3 191" stroke="#1818e0" stroke-width="0.7" fill="none"/><path d="M706.4 117 V190.4" stroke="#ee1010" stroke-width="2" fill="none"/><path d="M707.2 187.6 Q707.4 190.6 709.4 191" stroke="#ee1010" stroke-width="0.8" fill="none"/><path d="M705.6 188.4 Q705.4 190.8 704 191" stroke="#ee1010" stroke-width="0.7" fill="none"/><path d="M796.8 117 V190.4" stroke="#10d810" stroke-width="2" fill="none"/><path d="M796 187.6 Q795.8 190.6 793.8 191" stroke="#10d810" stroke-width="0.8" fill="none"/><path d="M797.6 188.4 Q797.8 190.8 799.2 191" stroke="#10d810" stroke-width="0.7" fill="none"/><path d="M818.4 117 V190.4" stroke="#1818d0" stroke-width="2" fill="none"/><path d="M817.6 187.6 Q817.4 190.6 815.4 191" stroke="#1818d0" stroke-width="0.8" fill="none"/><path d="M811.5 120.6 L815.8 129 H807.2 Z" fill="#f4d90c"/><path d="M811.5 123.6 v3" stroke="#222" stroke-width="0.9"/><circle cx="811.5" cy="127.8" r="0.5" fill="#222"/></svg>
<span class="t" style="left:660.6px;top:196px;line-height:11px;font-size:8.8px;color:#d6d6d6;transform:scaleX(0.779);">Mean: 101.69</span>
<span class="t" style="left:660.6px;top:206px;line-height:11px;font-size:8.8px;color:#d6d6d6;transform:scaleX(0.763);">Std. Dev.: 107.55</span>
<span class="t" style="left:660.6px;top:215px;line-height:11px;font-size:8.8px;color:#d6d6d6;transform:scaleX(0.790);">Median: 43</span>
<span class="t" style="left:660.6px;top:225px;line-height:11px;font-size:8.8px;color:#d6d6d6;transform:scaleX(0.755);">Pixels: 68167</span>
<span class="t" style="left:740.6px;top:196px;line-height:11px;font-size:8.8px;color:#858585;transform:scaleX(0.748);">Level: -</span>
<span class="t" style="left:740.6px;top:206px;line-height:11px;font-size:8.8px;color:#858585;transform:scaleX(0.751);">Pixels: -</span>
<span class="t" style="left:740.6px;top:215px;line-height:11px;font-size:8.8px;color:#858585;transform:scaleX(0.763);">Percentile: -</span>
<span class="t" style="left:660.6px;top:240px;line-height:11px;font-size:8.8px;color:#c0c0c0;transform:scaleX(0.806);">Min:</span>
<div style="left:676px;top:238.6px;width:35px;height:12.4px;background:#222222;border-radius:2px;"></div>
<span class="t" style="left:679px;top:240px;line-height:11px;font-size:8.8px;color:#f2f2f2;transform:scaleX(0.897);">0</span>
<span class="t" style="left:767px;top:240px;line-height:11px;font-size:8.8px;color:#c0c0c0;transform:scaleX(0.765);">Max:</span>
<div style="left:783px;top:238.6px;width:35.5px;height:12.4px;background:#222222;border-radius:2px;"></div>
<span class="t" style="left:787.4px;top:240px;line-height:11px;font-size:8.8px;color:#f2f2f2;transform:scaleX(0.693);">1</span>
<div style="left:654.5px;top:260.6px;width:170.5px;height:1.6px;background:#1f1f1f;"></div>
<div style="left:654.5px;top:262.2px;width:170.5px;height:19.6px;background:#262626;"></div>
<div style="left:658.4px;top:266px;width:3.4px;height:12px;background:#404040;border-radius:1.7px;"></div>
<div style="left:667px;top:265.2px;width:25px;height:13.4px;background:#3a3a3a;border-radius:3px;"></div>
<span class="t" style="left:669.6px;top:267px;line-height:11px;font-size:8.8px;color:#ffffff;transform:scaleX(0.735);">Layers</span>
<span class="t" style="left:695.4px;top:267px;line-height:11px;font-size:8.8px;color:#e0e0e0;transform:scaleX(0.769);">Channels</span>
<span class="t" style="left:730.2px;top:267px;line-height:11px;font-size:8.8px;color:#e0e0e0;transform:scaleX(0.756);">Brushes</span>
<span class="t" style="left:761px;top:267px;line-height:11px;font-size:8.8px;color:#e0e0e0;transform:scaleX(0.781);">Stock</span>
<div style="left:812.4px;top:266.6px;width:10.2px;height:10.4px;background:#1f1f1f;border-radius:2.2px;border:1px solid #8c8c8c;box-sizing:border-box;"></div>
<svg style="left:814.4px;top:269.4px;" width="6.2" height="5" viewBox="0 0 6.2 5"><path d="M0.7 1 L3.1 3.9 L5.5 1" fill="none" stroke="#ffffff" stroke-width="1.3" stroke-linecap="round" stroke-linejoin="round"/></svg>
<span class="t" style="left:662.4px;top:288px;line-height:11px;font-size:8.4px;color:#b4b4b4;transform:scaleX(0.774);">Opacity:</span>
<div style="left:689.6px;top:286.2px;width:35.2px;height:12px;background:#222222;border-radius:2px;"></div>
<span class="t" style="left:693.4px;top:287px;line-height:11px;font-size:8.8px;color:#ffffff;transform:scaleX(0.785);">100 %</span>
<svg style="left:717.7px;top:290.3px;" width="5.8" height="3.8" viewBox="0 0 5.8 3.8"><path d="M1 0.855 L2.9 2.755 L4.8 0.855" fill="none" stroke="#dcdcdc" stroke-width="1.05" stroke-linecap="round" stroke-linejoin="round"/></svg>
<div style="left:730px;top:286.2px;width:63px;height:12px;background:#4b4b4b;border-radius:2px;"></div>
<span class="t" style="left:732.2px;top:287px;line-height:11px;font-size:8.8px;color:#ffffff;transform:scaleX(0.825);">Normal</span>
<svg style="left:785.1px;top:290.3px;" width="5.8" height="3.8" viewBox="0 0 5.8 3.8"><path d="M1 0.855 L2.9 2.755 L4.8 0.855" fill="none" stroke="#dcdcdc" stroke-width="1.05" stroke-linecap="round" stroke-linejoin="round"/></svg>
<svg style="left:796.6px;top:288.4px;" width="7.6" height="7.6" viewBox="0 0 9 9"><circle cx="4.5" cy="4.5" r="2.3" fill="none" stroke="#f0f0f0" stroke-width="1.5"/><path d="M7.30 4.50 L8.80 4.50" stroke="#f0f0f0" stroke-width="1.3"/><path d="M6.48 6.48 L7.54 7.54" stroke="#f0f0f0" stroke-width="1.3"/><path d="M4.50 7.30 L4.50 8.80" stroke="#f0f0f0" stroke-width="1.3"/><path d="M2.52 6.48 L1.46 7.54" stroke="#f0f0f0" stroke-width="1.3"/><path d="M1.70 4.50 L0.20 4.50" stroke="#f0f0f0" stroke-width="1.3"/><path d="M2.52 2.52 L1.46 1.46" stroke="#f0f0f0" stroke-width="1.3"/><path d="M4.50 1.70 L4.50 0.20" stroke="#f0f0f0" stroke-width="1.3"/><path d="M6.48 2.52 L7.54 1.46" stroke="#f0f0f0" stroke-width="1.3"/></svg>
<svg style="left:812px;top:288px;" width="5.8" height="8.3" viewBox="0 0 7 10"><rect x="0.6" y="4.2" width="5.6" height="4.8" rx="0.7" fill="#f4f4f4"/><path d="M1.8 4.4 V2.8 a1.6 1.6 0 0 1 3.2 0 V4.4" fill="none" stroke="#f4f4f4" stroke-width="1"/></svg>
<div style="left:654.5px;top:302.6px;width:170.5px;height:31.6px;background:#1c1c1c;"></div>
<div style="left:816.6px;top:302.6px;width:8.4px;height:31.6px;background:#282828;"></div>
<div style="left:654.5px;top:303.6px;width:162px;height:20.6px;background:#0b4a88;"></div>
<div style="left:665.4px;top:303.6px;width:0.8px;height:20.6px;background:#08315c;"></div>
<div style="left:686.4px;top:303.6px;width:0.8px;height:20.6px;background:#08315c;"></div>
<div style="left:793.2px;top:303.6px;width:0.8px;height:20.6px;background:#08315c;"></div>
<div style="left:666.2px;top:304px;width:20.2px;height:19.8px;background:#2b2b2b;"></div>
<svg style="left:656.6px;top:310.4px;" width="7" height="7" viewBox="0 0 7 7"><path d="M3.5 0.4v6.2M0.4 3.5h6.2M1.2 1.2l4.6 4.6M5.8 1.2l-4.6 4.6" stroke="#c5d3e4" stroke-width="0.6"/></svg>
<span class="t" style="left:689px;top:308px;line-height:12px;font-size:9px;color:#7fa8d4;transform:scaleX(0.789);">Pixel</span>
<svg style="left:770.4px;top:309.4px;" width="10" height="10" viewBox="0 0 10 10"><rect x="0.6" y="0.6" width="8.6" height="8.6" rx="1" fill="none" stroke="#9dbbdc" stroke-width="0.9"/><path d="M6.6 3.2 H3.4 V5 H6.4 V6.8 H3.2" fill="none" stroke="#9dbbdc" stroke-width="0.9"/></svg>
<svg style="left:800.4px;top:310px;" width="10" height="8" viewBox="0 0 10 8"><path d="M0.4 4 C2.4 0.6 7.4 0.6 9.4 4 C7.4 7.4 2.4 7.4 0.4 4Z" fill="#ffffff"/><circle cx="4.9" cy="4" r="1.9" fill="#0b4a88"/><circle cx="4.9" cy="4" r="0.8" fill="#fff"/></svg>
<div style="left:820.2px;top:314px;width:2.8px;height:6.6px;background:#8c8c8c;border-radius:1.4px;"></div>
<div style="left:654.5px;top:325px;width:162px;height:9.4px;background:#3a3a3a;"></div>
<div style="left:665.4px;top:325px;width:0.8px;height:9.4px;background:#262626;"></div>
<div style="left:686.4px;top:325px;width:0.8px;height:9.4px;background:#262626;"></div>
<div style="left:793.2px;top:325px;width:0.8px;height:9.4px;background:#262626;"></div>
<svg style="left:666.2px;top:325.6px;" width="20.2" height="9" viewBox="0 0 20.2 9"><path d="M0 2 Q0.2 0.2 1.6 0.5 Q10.1 2.6 18.6 0.5 Q20 0.2 20.2 2 V9 H0Z" fill="#0228ff"/></svg>
<svg style="left:657px;top:328px;" width="7" height="7" viewBox="0 0 7 7"><path d="M0.6 0.8l3 3.4M3.6 0.8l-3 3.4M4.6 0.6h1.8" stroke="#9a9a9a" stroke-width="0.6"/></svg>
<span class="t" style="left:689px;top:330px;line-height:12px;font-size:9px;color:#8a8a8a;transform:scaleX(0.784);clip-path:inset(0 0 70% 0);">(Pixel)</span>
<svg style="left:800.4px;top:330.4px;clip-path:inset(0 0 55% 0);" width="10" height="8" viewBox="0 0 10 8"><path d="M0.4 4 C2.4 0.6 7.4 0.6 9.4 4Z" fill="#d0d0d0"/></svg>
<div style="left:654.5px;top:334px;width:170.5px;height:20.4px;background:#3a3a3a;"></div>
<div style="left:654.5px;top:333.6px;width:170.5px;height:0.8px;background:#2c2c2c;"></div>
<svg style="left:659.6px;top:338.4px;" width="12" height="12" viewBox="0 0 12 12"><path d="M8 1.8 H1.6 a0.8 0.8 0 0 0 -0.8 0.8 V10.4 a0.8 0.8 0 0 0 0.8 0.8 H9 a0.8 0.8 0 0 0 0.8 -0.8 V5" fill="none" stroke="#e8e8e8" stroke-width="0.95"/><path d="M4.2 8 L4.8 6 L10.2 0.8 L11.4 2 L6.2 7.4Z" fill="none" stroke="#e8e8e8" stroke-width="0.9"/></svg>
<div style="left:696.8px;top:339.2px;width:10px;height:10px;background:#e8e8e8;border-radius:1px;"></div>
<span class="t" style="left:698.2px;top:339px;line-height:11px;font-size:8.6px;color:#222;font-weight:700;transform:scaleX(0.940);font-style:italic;">fx</span>
<svg style="left:709.8px;top:339.2px;" width="10" height="10" viewBox="0 0 10 10"><rect x="0" y="0" width="10" height="10" rx="1" fill="#e8e8e8"/><circle cx="5" cy="5" r="2.9" fill="#333"/></svg>
<svg style="left:723.4px;top:339.2px;" width="9" height="10" viewBox="0 0 9 10"><path d="M0.4 0.4 H8.4 L5.6 5 L8.4 9.6 H0.4 L3.2 5 Z" fill="#e8e8e8"/></svg>
<svg style="left:735.4px;top:339.2px;" width="10" height="10" viewBox="0 0 10 10"><circle cx="5" cy="5" r="4.3" fill="none" stroke="#e8e8e8" stroke-width="0.9"/><path d="M8.1 1.9 A4.3 4.3 0 0 1 1.9 8.1 Z" fill="#e8e8e8"/></svg>
<svg style="left:770.4px;top:339px;" width="11" height="11" viewBox="0 0 11 11"><rect x="0.5" y="0.5" width="9.6" height="9.6" rx="1" fill="#2c2c2c" stroke="#e8e8e8" stroke-width="1"/><circle cx="4.4" cy="4.4" r="2.6" fill="#e8e8e8"/><rect x="4.8" y="4.8" width="4" height="4" fill="#e8e8e8" stroke="#2c2c2c" stroke-width="0.5"/></svg>
<svg style="left:783px;top:339.2px;" width="11" height="10" viewBox="0 0 11 10"><path d="M0.6 1 H4 L5 2.4 H10 V9.4 H0.6 Z" fill="none" stroke="#e8e8e8" stroke-width="0.95" stroke-linejoin="round"/></svg>
<svg style="left:796px;top:339.2px;" width="10" height="10" viewBox="0 0 10 10"><rect x="0.2" y="0.2" width="2.4" height="2.4" fill="#e8e8e8"/><rect x="5" y="0.2" width="2.4" height="2.4" fill="#e8e8e8"/><rect x="2.6" y="2.6" width="2.4" height="2.4" fill="#e8e8e8"/><rect x="7.4" y="2.6" width="2.4" height="2.4" fill="#e8e8e8"/><rect x="0.2" y="5" width="2.4" height="2.4" fill="#e8e8e8"/><rect x="5" y="5" width="2.4" height="2.4" fill="#e8e8e8"/><rect x="2.6" y="7.4" width="2.4" height="2.4" fill="#e8e8e8"/><rect x="7.4" y="7.4" width="2.4" height="2.4" fill="#e8e8e8"/></svg>
<svg style="left:808.8px;top:338.8px;" width="9" height="11" viewBox="0 0 9 11"><path d="M0.6 2.4 H8.4 M3 2.2 V1 H6 V2.2" fill="none" stroke="#9a9a9a" stroke-width="0.9"/><path d="M1.4 3.4 L1.9 10 H7.1 L7.6 3.4 Z" fill="#6a6a6a" stroke="#9a9a9a" stroke-width="0.8"/></svg>
<div style="left:654.5px;top:354.2px;width:170.5px;height:1.8px;background:#1f1f1f;"></div>
<div style="left:654.5px;top:355px;width:170.5px;height:18.8px;background:#262626;"></div>
<div style="left:658.4px;top:358.8px;width:3.4px;height:12px;background:#404040;border-radius:1.7px;"></div>
<div style="left:667px;top:358px;width:37px;height:13.4px;background:#3a3a3a;border-radius:3px;"></div>
<span class="t" style="left:669.6px;top:360px;line-height:11px;font-size:8.8px;color:#ffffff;transform:scaleX(0.834);">Navigator</span>
<span class="t" style="left:707px;top:360px;line-height:11px;font-size:8.8px;color:#e0e0e0;transform:scaleX(0.780);">Transform</span>
<span class="t" style="left:744.6px;top:360px;line-height:11px;font-size:8.8px;color:#e0e0e0;transform:scaleX(0.818);">History</span>
<div style="left:812.4px;top:359.4px;width:10.2px;height:10.4px;background:#1f1f1f;border-radius:2.2px;border:1px solid #8c8c8c;box-sizing:border-box;"></div>
<svg style="left:814.4px;top:362.2px;" width="6.2" height="5" viewBox="0 0 6.2 5"><path d="M0.7 1 L3.1 3.9 L5.5 1" fill="none" stroke="#ffffff" stroke-width="1.3" stroke-linecap="round" stroke-linejoin="round"/></svg>
<div style="left:665.2px;top:382px;width:11px;height:11.4px;background:#242424;border-radius:2px;"></div>
<div style="left:667.8px;top:387.2px;width:5.8px;height:1.1px;background:#f0f0f0;"></div>
<div style="left:681px;top:383.2px;width:86.6px;height:2.4px;background:#1f1f1f;border-radius:1.2px;"></div>
<div style="left:681px;top:383.2px;width:12px;height:2.4px;background:#1a6fc6;border-radius:1.2px;"></div>
<div style="left:692.4px;top:381.4px;width:3.6px;height:6px;background:#e0e0e0;border-radius:1px;"></div>
<div style="left:682.4px;top:391px;width:1.2px;height:1.4px;background:#a4a4a4;"></div>
<div style="left:686.6px;top:391px;width:1.2px;height:1.4px;background:#a4a4a4;"></div>
<div style="left:697px;top:391px;width:1.2px;height:1.4px;background:#a4a4a4;"></div>
<div style="left:710.6px;top:391px;width:1.2px;height:1.4px;background:#a4a4a4;"></div>
<div style="left:715px;top:391px;width:1.2px;height:1.4px;background:#a4a4a4;"></div>
<div style="left:724.6px;top:391px;width:1.2px;height:1.4px;background:#a4a4a4;"></div>
<div style="left:733.4px;top:391px;width:1.2px;height:1.4px;background:#a4a4a4;"></div>
<div style="left:745.6px;top:391px;width:1.2px;height:1.4px;background:#a4a4a4;"></div>
<div style="left:750px;top:391px;width:1.2px;height:1.4px;background:#a4a4a4;"></div>
<div style="left:756px;top:391px;width:1.2px;height:1.4px;background:#a4a4a4;"></div>
<div style="left:765px;top:391px;width:1.2px;height:1.4px;background:#a4a4a4;"></div>
<div style="left:772.2px;top:382px;width:11px;height:11.4px;background:#242424;border-radius:2px;"></div>
<div style="left:774.6px;top:387.2px;width:6.2px;height:1.1px;background:#f0f0f0;"></div>
<div style="left:777.15px;top:384.6px;width:1.1px;height:6.2px;background:#f0f0f0;"></div>
<div style="left:787px;top:381.4px;width:32px;height:12.4px;background:#222222;border-radius:2px;"></div>
<span class="t" style="left:790.6px;top:382px;line-height:11px;font-size:8.8px;color:#f2f2f2;transform:scaleX(0.798);">42 %</span>
<div style="left:654.5px;top:395.6px;width:170.5px;height:0.8px;background:#333;"></div>
<div style="left:702px;top:400.6px;width:77px;height:43.4px;background:#fff;"></div>
<svg style="left:702px;top:400.6px;" width="77" height="43.4" viewBox="0 0 77 43.4"><g transform="scale(0.14712) translate(-74 -123.3)"><path d="M289.2 249.5 A82 94.2 0 1 0 421.6 249.5 A221.7 221.7 0 0 1 289.2 249.5 Z" fill="#0228ff"/><path d="M314.5 282 C314.7 287 315.8 292 317.5 297.7 M384.5 280.1 C384.8 285 386.5 290 388.5 295.8" stroke="#4bdd44" stroke-width="12" stroke-linecap="round" fill="none"/><path d="M329.4 345.8 C337 348.5 345 349.2 351.6 348.6 C360 348 375 343.5 383.5 332.8" stroke="#4bdd44" stroke-width="12" stroke-linecap="round" fill="none"/><circle cx="371.4" cy="170.3" r="7.9" fill="#4bdd44"/></g></svg>
</div>
<div class="sec" id="statusbar">
<div style="left:0px;top:447.6px;width:825px;height:0.8px;background:#2e2e2e;"></div>
<svg style="left:0px;top:450px;" width="130" height="13" viewBox="0 0 130 13"><path d="M4.4 3.2v6.8" stroke="#9a9a9a" stroke-width="1.1"/><path d="M10.8 3.2 L5.6 6.6 L10.8 10Z" fill="#9a9a9a"/><path d="M22 3.2 L16.8 6.6 L22 10Z" fill="#9a9a9a"/><path d="M80.4 3.2 L85.4 6.6 L80.4 10Z" fill="#f0f0f0"/><path d="M90.6 3.4 L95 6.6 L90.6 9.8Z" fill="#9a9a9a"/><path d="M96.2 3.4v6.4" stroke="#9a9a9a" stroke-width="1"/><path d="M103.6 2.6 h4.4 l1.8 1.8 v6.4 h-6.2z" fill="#666" stroke="#777" stroke-width="0.7"/><rect x="116.4" y="2.4" width="5" height="6.2" rx="0.6" fill="none" stroke="#e0e0e0" stroke-width="0.9"/><rect x="118.6" y="4.6" width="5" height="6.2" rx="0.6" fill="#3a3a3a" stroke="#e0e0e0" stroke-width="0.9"/></svg>
<span class="t" style="left:42.2px;top:452px;line-height:11px;font-size:8.6px;color:#ffffff;transform:scaleX(0.809);">1 of 1</span>
<span class="t" style="left:137.6px;top:451px;line-height:12px;font-size:9px;color:#cdcdcd;transform:scaleX(0.880);"><b>Drag</b> to start painting. </span>
<span class="t" style="left:216.4px;top:451px;line-height:12px;font-size:9px;color:#cdcdcd;transform:scaleX(0.870);"><b>Drag</b>+<b>Shift</b> to continue last stroke. </span>
<span class="t" style="left:338.9px;top:451px;line-height:12px;font-size:9px;color:#cdcdcd;transform:scaleX(0.868);"><b>Drag</b>+<b>Alt</b> to use colour picker. </span>
<span class="t" style="left:445.5px;top:451px;line-height:12px;font-size:9px;color:#cdcdcd;transform:scaleX(0.865);"><b>Ctrl</b> + <b>Alt</b> + <b>Drag</b> to alter brush parameters. </span>
<span class="t" style="left:598.2px;top:451px;line-height:12px;font-size:9px;color:#cdcdcd;transform:scaleX(0.858);"><b>Ctrl</b> + <b>Alt</b> + <b>Click</b> to cycle brush parameter groups.</span>
<svg style="left:816px;top:455px;" width="8" height="8" viewBox="0 0 8 8"><path d="M7.6 1.4 V7 H2 Z" fill="#5c5c5c"/></svg>
<div style="left:0px;top:462.6px;width:825px;height:1.4px;background:#262626;border-radius:0 0 6px 6px;"></div>
<div style="left:823.8px;top:6px;width:1.2px;height:452px;background:#2a2a2a;"></div>
<div style="left:0px;top:6px;width:1px;height:452px;background:#262626;"></div>
</div>
<div class="sec" id="assistant">
<div style="left:449.9px;top:129px;width:174.4px;height:51.2px;background:#3d3d3d;border-radius:4px;"></div>
<svg style="left:463.3px;top:142.4px;" width="13" height="13" viewBox="0 0 13 13"><circle cx="6.5" cy="6.5" r="4.5" fill="none" stroke="#ffffff" stroke-width="1.15"/><path d="M10.93 8.34 L12.14 8.83" stroke="#ffffff" stroke-width="1.7"/><path d="M8.34 10.93 L8.83 12.14" stroke="#ffffff" stroke-width="1.7"/><path d="M4.66 10.93 L4.17 12.14" stroke="#ffffff" stroke-width="1.7"/><path d="M2.07 8.34 L0.86 8.83" stroke="#ffffff" stroke-width="1.7"/><path d="M2.07 4.66 L0.86 4.17" stroke="#ffffff" stroke-width="1.7"/><path d="M4.66 2.07 L4.17 0.86" stroke="#ffffff" stroke-width="1.7"/><path d="M8.34 2.07 L8.83 0.86" stroke="#ffffff" stroke-width="1.7"/><path d="M10.93 4.66 L12.14 4.17" stroke="#ffffff" stroke-width="1.7"/></svg>
<span class="t" style="left:467.9px;top:144px;line-height:10px;font-size:7.6px;color:#fff;font-weight:700;transform:scaleX(0.819);">?</span>
<span class="t" style="left:490px;top:134px;line-height:11px;font-size:8.6px;color:#ececec;font-weight:700;transform:scaleX(0.765);">Assistant</span>
<span class="t" style="left:490px;top:144px;line-height:11px;font-size:8.6px;color:#e4e4e4;transform:scaleX(0.806);">The assistant added a new pixel layer.</span>
<span class="t" style="left:490px;top:154px;line-height:11px;font-size:8.6px;color:#e4e4e4;transform:scaleX(0.828);">You are now painting on that new layer.</span>
<div style="left:569.4px;top:165px;width:48px;height:12px;background:#4a4a4a;border-radius:2.5px;"></div>
<span class="t" style="left:579.4px;top:166px;line-height:11px;font-size:8.8px;color:#ffffff;transform:scaleX(0.773);">Assistant</span>
<svg style="left:444.8px;top:125.4px;" width="11.6" height="11.6" viewBox="0 0 11.6 11.6"><circle cx="5.7" cy="5.7" r="4.9" fill="#000" stroke="#fff" stroke-width="1"/><path d="M3.8 3.8l3.8 3.8M7.6 3.8l-3.8 3.8" stroke="#fff" stroke-width="1.5" fill="none"/></svg>
<svg style="left:0px;top:0px;" width="825" height="464" viewBox="0 0 825 464"><path d="M328.9 33.3 L435.5 111.9 L434.8 106.1 L442.9 122.7 L424.8 119.0 L430.6 118.2 L327.7 34.7Z" fill="#ff0000"/><rect x="443.3" y="123.4" width="191.2" height="62.8" rx="3.6" fill="none" stroke="#ff0000" stroke-width="2.6"/></svg>
</div>
</div>
</body>
</html>
